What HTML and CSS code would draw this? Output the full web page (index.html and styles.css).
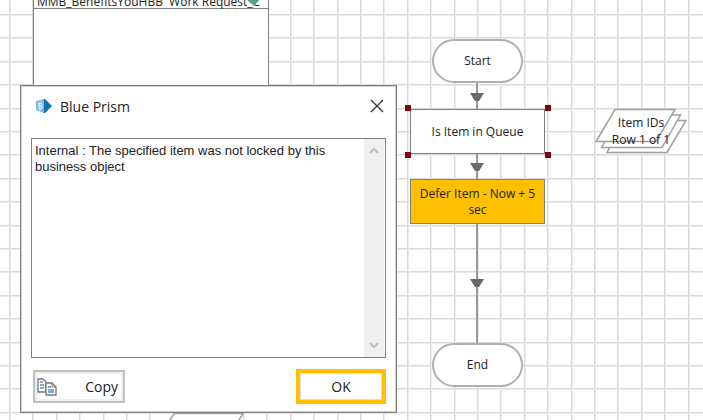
FILE: index.html
```html
<!DOCTYPE html>
<html lang="en">
<head>
    <meta charset="utf-8">
    <title>Blue Prism</title>
    <link rel="stylesheet" href="styles.css">
</head>
<body>
    <div class="canvas">
        <div class="info-box">
            <span class="info-title">MMB_BenefitsYouHBB&nbsp; Work Request_C</span>
            <svg class="info-check" width="16" height="14" viewBox="0 0 16 14">
                <path d="M0 7 L3 4 L6 6 L11 0 H16 V3 L7 13 Z" fill="#5f9e86"/>
            </svg>
        </div>

        <svg class="links" width="703" height="420" viewBox="0 0 703 420">
            <g stroke="#999999" stroke-width="2">
                <path d="M477 82 V110"/>
                <path d="M477 152 V180"/>
                <path d="M477 223 V344"/>
            </g>
            <g fill="#696969">
                <path d="M470 93 H484 L479 101 H475 Z"/>
                <path d="M470 163 H484 L479 171 H475 Z"/>
                <path d="M470 279 H484 L479 287 H475 Z"/>
            </g>
            <g fill="#ffffff" stroke="#a0a0a0" stroke-width="1.5">
                <path d="M625 120.500 H686 L667 152.500 H607 Z"/>
                <path d="M620 115 H680.500 L662 147.500 H601.500 Z"/>
                <path d="M615 109.500 H675 L656 141.500 H596 Z"/>
                <path d="M167 425 L174 413.500 H243 L236 425 Z"/>
            </g>
        </svg>

        <div class="node terminal start">Start</div>
        <div class="node action queue">Is Item in Queue
            <i class="handle top-left"></i>
            <i class="handle top-right"></i>
            <i class="handle bottom-left"></i>
            <i class="handle bottom-right"></i>
        </div>
        <div class="node action defer">Defer Item - Now + 5 sec</div>
        <div class="node terminal end">End</div>
        <div class="node collection">Item IDs<br>Row 1 of 1</div>

        <div class="dialog" role="dialog" aria-labelledby="dialog-title">
            <div class="title-bar">
                <svg width="16" height="16" viewBox="0 0 16 16">
                    <path d="M7 1 L9 1 L16 8 L9 15 L7 15 Z" fill="#0b72b5"/>
                    <path d="M0 3 L8 1 V15 L0 12 Z" fill="#7fbbe0"/>
                    <path d="M3 5 H5 L6 6 V7 L5 8 L6 9 V10 L5 11 H3 Z M3 8 H5" fill="none" stroke="#ffffff"/>
                </svg>
                <h1 id="dialog-title">Blue Prism</h1>
                <button class="close-button" aria-label="Close">
                    <svg width="14" height="14" viewBox="0 0 14 14">
                        <path d="M1 1 L13 13 M13 1 L1 13" stroke="#333333" stroke-width="1.3"/>
                    </svg>
                </button>
            </div>

            <div class="message-box">
                <textarea class="message" aria-label="Message" readonly>Internal : The specified item was not locked by this business object</textarea>
                <div class="scrollbar">
                    <svg width="10" height="8" viewBox="0 0 10 8"><path d="M1 6 L5 2 L9 6" fill="none" stroke="#bfbfbf" stroke-width="2"/></svg>
                    <svg width="10" height="8" viewBox="0 0 10 8"><path d="M1 2 L5 6 L9 2" fill="none" stroke="#bfbfbf" stroke-width="2"/></svg>
                </div>
            </div>

            <div class="button-container">
                <button class="copy-button">
                    <svg width="20" height="18" viewBox="0 0 20 18">
                        <path d="M1 1 H6 L9 4 V14 H1 Z" fill="#ffffff" stroke="#777777" stroke-width="1.3"/>
                        <path d="M3 4 H6 M3 7 H7 M3 10 H7" stroke="#5b93cf" stroke-width="1.3"/>
                        <path d="M9 5 H15 L19 9 V17 H9 Z" fill="#ffffff" stroke="#777777" stroke-width="1.3"/>
                        <path d="M15 5 V9 H19" fill="none" stroke="#777777"/>
                        <path d="M11 9 H14 M11 12 H17 M11 14 H17" stroke="#5b93cf" stroke-width="1.3"/>
                    </svg>
                    Copy
                </button>
                <button class="ok-button">OK</button>
            </div>
        </div>
    </div>
</body>
</html>
```
FILE: styles.css
```css
body {
    margin: 0;
    font-family: "Open Sans", "Noto Sans", sans-serif;
    color: #222222;
}

/* grid cells repeat in groups of five */
.canvas {
    position: relative;
    min-height: 100vh;
    overflow: hidden;
    background-color: #ffffff;
    background-image:
        repeating-linear-gradient(to right,
            #dadada 0 1px, #ececec 1px 2px, transparent 2px 23px,
            #dadada 23px 24px, #ececec 24px 25px, transparent 25px 47px,
            #dadada 47px 48px, #ececec 48px 49px, transparent 49px 70px,
            #dadada 70px 71px, #ececec 71px 72px, transparent 72px 94px,
            #dadada 94px 95px, #ececec 95px 96px, transparent 96px 117px),
        repeating-linear-gradient(to bottom,
            #dadada 0 1px, #ececec 1px 2px, transparent 2px 23px,
            #dadada 23px 24px, #ececec 24px 25px, transparent 25px 47px,
            #dadada 47px 48px, #ececec 48px 49px, transparent 49px 70px,
            #dadada 70px 71px, #ececec 71px 72px, transparent 72px 94px,
            #dadada 94px 95px, #ececec 95px 96px, transparent 96px 117px);
    background-size: 117px 117px;
    background-position: 9px 14px;
}

.info-box {
    position: absolute;
    left: 33px;
    top: -12px;
    box-sizing: border-box;
    width: 236px;
    height: 120px;
    border: 1px solid #808080;
    background: linear-gradient(#808080, #808080) 0 19px / 100% 1px no-repeat #ffffff;
}

.info-title {
    display: block;
    padding-left: 3px;
    font-size: 12px;
    line-height: 26px;
    white-space: pre;
}

.info-check {
    position: absolute;
    right: 5px;
    top: 4px;
}

.links {
    position: absolute;
    left: 0;
    top: 0;
}

.node {
    position: absolute;
    display: flex;
    align-items: center;
    justify-content: center;
    box-sizing: border-box;
    font-size: 12px;
    line-height: 16px;
    text-align: center;
}

.terminal {
    left: 432px;
    width: 91px;
    height: 44px;
    border: 2px solid #b0b0b0;
    border-radius: 22px;
    background-color: #ffffff;
}

.start {
    top: 39px;
}

.end {
    top: 343px;
}

.action {
    left: 410px;
    width: 135px;
    height: 45px;
    border: 1px solid #808080;
    background-color: #ffffff;
}

.queue {
    top: 109px;
}

.defer {
    top: 179px;
    background-color: #ffc000;
}

.collection {
    left: 604px;
    top: 114px;
    width: 74px;
    line-height: 17px;
}

.handle {
    position: absolute;
    width: 6px;
    height: 6px;
    background-color: #850505;
}

.top-left {
    left: -6px;
    top: -5px;
}

.top-right {
    right: -7px;
    top: -5px;
}

.bottom-left {
    left: -6px;
    bottom: -5px;
}

.bottom-right {
    right: -7px;
    bottom: -5px;
}

.dialog {
    position: absolute;
    left: 20px;
    top: 85px;
    box-sizing: border-box;
    width: 377px;
    padding: 0 10px 8px;
    border: 1px solid #808080;
    box-shadow: inset 0 0 0 1px #d0d0d0;
    background-color: #ffffff;
}

.title-bar {
    display: flex;
    align-items: center;
    gap: 8px;
    height: 40px;
    margin-bottom: 12px;
    padding: 0 2px 0 5px;
}

.title-bar h1 {
    flex: 1;
    margin: 0;
    font-size: 14px;
    font-weight: normal;
}

.close-button {
    display: flex;
    padding: 0;
    border: none;
    background: none;
}

.message-box {
    display: flex;
    height: 218px;
    border: 1px solid #808080;
    padding-right: 1px;
}

.message {
    flex: 1;
    padding: 4px 3px;
    border: none;
    outline: none;
    resize: none;
    overflow: hidden;
    font: 13px/16px "Liberation Sans", Arial, sans-serif;
    color: #222222;
}

.scrollbar {
    display: flex;
    flex-direction: column;
    align-items: center;
    justify-content: space-between;
    width: 20px;
    padding: 8px 0;
    box-sizing: border-box;
    background-color: #f0f0f0;
}

.button-container {
    display: flex;
    align-items: center;
    justify-content: space-between;
    margin-top: 11px;
    padding-left: 2px;
}

.copy-button,
.ok-button {
    box-sizing: border-box;
    height: 35px;
    background-color: #ffffff;
    font-family: inherit;
    font-size: 14px;
    color: #222222;
}

.copy-button {
    display: flex;
    align-items: center;
    justify-content: space-between;
    width: 92px;
    height: 33px;
    padding: 0 5px 0 2px;
    border: 2px solid #c0c0c0;
    box-shadow: inset 0 0 0 2px #eeeeee;
}

.ok-button {
    width: 90px;
    border: 4px solid #ffc000;
    box-shadow: inset 0 0 0 1px #dddddd;
}
```
